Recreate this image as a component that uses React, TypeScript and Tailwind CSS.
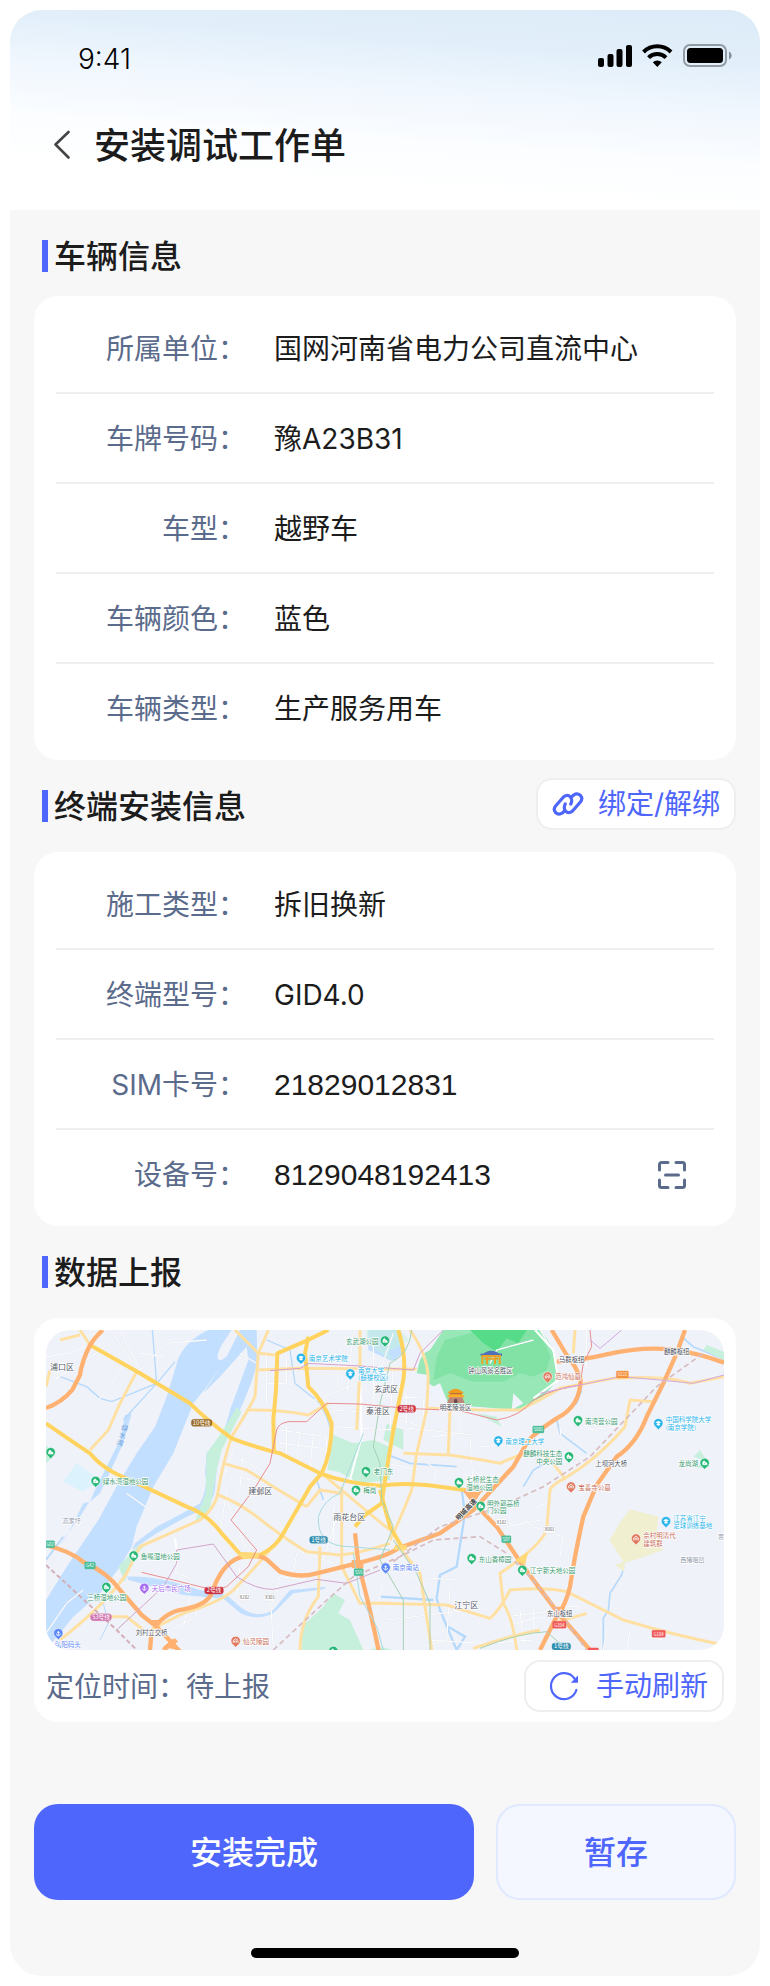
import React from "react";

type Row = { label: string; value: string; scan?: boolean; digits?: boolean };

const vehicleRows: Row[] = [
  { label: "所属单位：", value: "国网河南省电力公司直流中心" },
  { label: "车牌号码：", value: "豫A23B31" },
  { label: "车型：", value: "越野车" },
  { label: "车辆颜色：", value: "蓝色" },
  { label: "车辆类型：", value: "生产服务用车" },
];

const terminalRows: Row[] = [
  { label: "施工类型：", value: "拆旧换新" },
  { label: "终端型号：", value: "GID4.0" },
  { label: "SIM卡号：", value: "21829012831", digits: true },
  { label: "设备号：", value: "8129048192413", digits: true, scan: true },
];

function StatusIcons() {
  return (
    <svg className="h-[30px] w-[136px]" viewBox="0 0 136 30" aria-hidden="true">
      <g>
        <rect x="0" y="17" width="6" height="9" rx="2" />
        <rect x="9.500" y="13" width="6" height="13" rx="2" />
        <rect x="18.500" y="8" width="6" height="18" rx="2" />
        <rect x="28" y="4" width="6" height="22" rx="2" />
      </g>
      <g fill="none" stroke="#000" strokeWidth="4">
        <path d="M45.500 11a19.500 19.500 0 0 1 27.500 0" />
        <path d="M50.500 16.600a12.500 12.500 0 0 1 17.500 0" />
      </g>
      <path d="M54.800 21.200a6.800 6.800 0 0 1 9 0L59.300 26z" />
      <rect x="86" y="4" width="42" height="21" rx="6" fill="none" stroke="#000" strokeOpacity=".35" strokeWidth="2" />
      <rect x="89" y="7" width="36" height="15" rx="3.500" />
      <path d="M131 10.500c3.500 1.500 3.500 6.500 0 8z" fillOpacity=".4" />
    </svg>
  );
}

function LinkIcon() {
  return (
    <svg className="h-[26px] w-8" viewBox="0 0 32 26" fill="none" stroke="#4e66fb" strokeWidth="3.200" strokeLinecap="round" strokeLinejoin="round" aria-hidden="true">
      <path d="M12 20.500L10.300 22Q6.800 24.500 3.500 21.500Q.8 18.200 3.800 14.800L11.500 6Q15.500 2.800 18.500 6Q20.800 9 18.800 13" />
      <path d="M20 5.500L21.700 4Q25.200 1.500 28.500 4.500Q31.200 7.800 28.200 11.200L20.500 20Q16.500 23.200 13.500 20Q11.200 17 13.200 13" />
    </svg>
  );
}

function ScanIcon() {
  return (
    <svg className="size-8" viewBox="0 0 32 32" fill="none" stroke="#5b6b8c" strokeWidth="3" strokeLinecap="round" strokeLinejoin="round" aria-hidden="true">
      <path d="M3.500 11V5.500a2 2 0 0 1 2-2H12M20 3.500h6.500a2 2 0 0 1 2 2V11M28.500 21v5.500a2 2 0 0 1-2 2H20M12 28.500H5.500a2 2 0 0 1-2-2V21M9.500 16h13" />
    </svg>
  );
}

function RefreshIcon() {
  return (
    <svg className="size-8" viewBox="0 0 32 32" fill="none" aria-hidden="true">
      <path d="M28.400 20A13 13 0 1 1 26.500 8.500" stroke="#4e66fb" strokeWidth="2.200" strokeLinecap="round" />
      <path d="M30 5.500v7.200h-7.200z" fill="#4e66fb" />
    </svg>
  );
}

function SectionTitle({ children, action }: { children: React.ReactNode; action?: React.ReactNode }) {
  return (
    <div className="flex items-center justify-between pl-2">
      <h2 className="flex items-center gap-1.5 text-[32px] leading-[44px] font-medium text-[#1c1c1c]">
        <span className="h-8 w-1.5 bg-[#4e66fb]" />
        <span className="pt-0.5">{children}</span>
      </h2>
      {action}
    </div>
  );
}

function InfoCard({ rows }: { rows: Row[] }) {
  return (
    <dl className="divide-y-2 divide-[#eeeeee] rounded-3xl bg-white px-[22px] py-2">
      {rows.map((row) => (
        <div key={row.label} className="flex h-[90px] items-center gap-7 pt-0.5 last:h-[88px]">
          <dt className="w-[190px] text-right text-[#5b6b8c]">{row.label}</dt>
          <dd className="flex flex-1 items-center justify-between pr-[26px] text-[#1c1c1c]">
            <span className={row.digits ? "font-['Liberation_Sans',sans-serif] text-[30px]" : ""}>{row.value}</span>
            {row.scan && (
              <button type="button" aria-label="扫码">
                <ScanIcon />
              </button>
            )}
          </dd>
        </div>
      ))}
    </dl>
  );
}

const expressways = [
  "M188 30Q165 52 150 75Q125 125 120 165L98 208Q65 248 18 264",
  "M18 676Q90 692 130 726Q200 755 240 810L305 885L350 920L425 1000",
  "M345 920Q380 875 430 868Q500 855 515 820Q545 730 600 712Q650 700 680 718L720 755Q780 775 830 760L950 730Q1040 710 1075 685L1200 640L1300 570L1420 440L1460 370Q1480 340 1550 295Q1620 260 1622 180Q1610 140 1580 105L1535 30",
  "M1550 125Q1640 118 1700 103Q1800 80 1890 88Q1980 100 2052 128",
  "M1935 30L1910 100L1870 190L1820 290Q1790 370 1730 410L1670 495L1630 590Q1605 700 1590 800Q1575 860 1555 880L1500 990",
  "M1275 510Q1310 560 1370 620L1450 740L1555 880L1650 990",
  "M945 640L955 730L985 850L1018 1000",
  "M330 990L335 930M370 990L410 960M1280 500L1330 510",
];

const arterials = [
  "M150 75L300 160L450 250Q500 300 575 355Q640 380 720 400L840 460Q920 490 1020 497Q1100 485 1200 500L1290 512",
  "M18 310Q90 360 150 400Q190 450 270 480L440 560Q500 580 545 640L600 702L660 705Q710 680 730 640L810 500L845 460Q875 400 875 310Q850 240 805 200L795 100L805 50",
  "M865 30L800 62L712 100L708 210L700 300L702 400",
  "M1075 30Q1100 110 1090 180L1060 330L1035 480L1025 550L975 585L945 620",
  "M1020 510L1050 620L1085 680",
];

const streets = [
  "M120 30L150 75M290 155L240 250L205 330L150 390",
  "M585 30L655 100Q650 160 645 230Q620 280 575 350Q550 420 535 510Q530 560 480 600L300 680L260 760Q200 850 60 960",
  "M685 30L655 100L705 105M620 270Q720 268 805 285L865 250",
  "M550 430L620 450L700 500L800 560M535 525Q600 550 650 590Q740 660 800 695L900 705Q960 700 1050 670",
  "M845 460L1000 590L1050 630M905 500L905 740L935 800L960 850L1050 850",
  "M960 30L960 150L950 330M655 150L780 145L1130 148",
  "M1110 30Q1160 100 1165 170L1160 270L1130 400L1115 510Q1080 600 1050 660",
  "M1165 265L1330 270L1440 270Q1500 240 1560 205L1720 175Q1880 165 1950 190L2052 170",
  "M1090 400L1230 405Q1330 420 1380 430Q1440 400 1495 395L1535 425L1575 475",
  "M1840 245L1770 240L1755 320Q1680 410 1575 475Q1540 490 1530 510L1520 630Q1500 680 1380 760L1390 850Q1420 900 1430 990",
  "M1230 270L1225 400M1605 30L1600 100M1600 180L1550 160",
  "M1020 850L1220 855L1350 895Q1380 870 1410 810Q1520 800 1580 815L1750 900Q1900 945 2052 975M1555 905L1640 880",
  "M840 680L835 830Q780 900 780 990M1085 690L1140 760L1175 990",
  "M150 890L260 890L310 930M330 930L430 880Q560 840 590 800Q650 740 730 640",
  "M1300 985Q1400 950 1500 930M800 560L840 510L905 520",
  "M18 200L30 150M60 60L120 45",
];

const lanes = [
  "M40 180L140 120L200 75M18 110L90 100L150 75M60 120L50 180M40 400L100 340M80 350L210 200L260 120",
  "M210 30L280 130M240 30L300 150M300 150L380 70L500 60M300 100L370 110",
  "M680 100L680 250M740 110L740 190L680 190M690 240L860 240M650 130L600 100",
  "M720 330L860 350L860 400M740 320L740 420M780 330L770 430M820 340L810 450M720 370L850 385",
  "M570 400L700 470M590 470L680 490M610 400L600 500M560 480L650 560M580 390L550 470M560 510L540 640",
  "M850 130L1050 160M850 230L1000 170M900 80L890 200M940 40L920 230M1000 60L1000 260M1060 120L1050 330M870 270L1040 280M880 320L1060 330",
  "M1030 230L1180 235M1100 220L1100 310M1150 240L1150 320L1080 300M1060 320L1300 345L1320 380L1390 375M1290 350L1300 500",
  "M1260 280L1260 340L1180 350M1350 130L1370 90L1480 60M1500 30L1550 110L1550 180M1640 30L1640 150",
  "M1660 260L1720 230L1800 130L1830 110M1560 320Q1560 380 1600 400L1660 430M1740 320L1640 330",
  "M1060 40L1010 180M1140 450L1040 430M1110 390L1190 450L1180 490",
  "M640 740L550 660M400 650L415 700L410 760L470 780M600 740L590 830M650 740L690 800L700 990M760 760L770 700",
  "M770 690L880 730M810 650L860 660M900 560L850 720M880 560L880 690M700 850L720 770L800 780",
  "M350 950L470 890L470 850M430 920L450 830M180 980L270 890M18 940L80 850L130 810",
  "M1030 700L1100 770L1250 780L1400 780M1230 800L1220 960L1150 980M1030 780L1010 880M1040 900L1290 870L1340 940M1160 960L1330 970L1350 930",
  "M1390 920L1500 890L1560 920M1440 870L1450 970M1480 870L1480 950M1400 890L1560 870M1340 970L1480 960",
  "M1400 560L1480 620L1570 650L1560 710L1520 760M1400 620L1500 600M1380 640L1330 550M1490 560L1550 540",
  "M1700 930L1690 990M1770 930L1760 990M1820 950L1870 960L1900 990M1560 860L1620 860",
  "M260 520L330 570M620 690L560 540L640 460",
];

type Poi = { x: number; y: number; color: string; text: string[]; tx: number; ty: number; anchor?: "start" | "middle" | "end" };
const GREEN = "#27b877";
const GTEXT = "#379a70";
const BLUE = "#29b4ea";
const BROWN = "#e07a60";

const pois: Poi[] = [
  { x: 1035, y: 62, color: GREEN, text: ["玄武湖公园"], tx: 918, ty: 71 },
  { x: 783, y: 114, color: BLUE, text: ["南京艺术学院"], tx: 806, ty: 123 },
  { x: 931, y: 161, color: BLUE, text: ["南京大学", "(鼓楼校区)"], tx: 954, ty: 158 },
  { x: 32, y: 397, color: GREEN, text: [], tx: 0, ty: 0 },
  { x: 167, y: 483, color: GREEN, text: ["绿水湾湿地公园"], tx: 188, ty: 492 },
  { x: 978, y: 454, color: GREEN, text: ["老门东"], tx: 1001, ty: 463 },
  { x: 948, y: 510, color: GREEN, text: ["梅岗"], tx: 970, ty: 519 },
  { x: 1523, y: 170, color: BROWN, text: ["范鸿仙墓"], tx: 1545, ty: 178 },
  { x: 1375, y: 362, color: BLUE, text: ["南京理工大学"], tx: 1396, ty: 372 },
  { x: 1614, y: 301, color: GREEN, text: ["南湾营公园"], tx: 1635, ty: 311 },
  { x: 1855, y: 310, color: BLUE, text: ["中国科学院大学", "(南京学院)"], tx: 1877, ty: 306 },
  { x: 1587, y: 410, color: GREEN, text: ["麒麟科技生态", "中央公园"], tx: 1567, ty: 409, anchor: "end" },
  { x: 1994, y: 429, color: GREEN, text: ["龙尚湖"], tx: 1974, ty: 438, anchor: "end" },
  { x: 1257, y: 487, color: GREEN, text: ["七桥瓮生态", "湿地公园"], tx: 1279, ty: 486 },
  { x: 1593, y: 500, color: BROWN, text: ["宝善寺公墓"], tx: 1615, ty: 511 },
  { x: 281, y: 707, color: GREEN, text: ["鱼嘴湿地公园"], tx: 302, ty: 718 },
  { x: 199, y: 801, color: GREEN, text: ["三桥湿地公园"], tx: 200, ty: 841, anchor: "middle" },
  { x: 313, y: 804, color: "#a56cf0", text: ["天后市民广场"], tx: 335, ty: 814 },
  { x: 55, y: 940, color: "#5b87f7", text: ["弘阳码头"], tx: 44, ty: 980 },
  { x: 587, y: 963, color: BROWN, text: ["仙灵陵园"], tx: 609, ty: 973 },
  { x: 1322, y: 558, color: GREEN, text: ["明外郭高桥", "门公园"], tx: 1341, ty: 557 },
  { x: 1295, y: 715, color: GREEN, text: ["东山香樟园"], tx: 1316, ty: 725 },
  { x: 1447, y: 750, color: GREEN, text: ["江宁新天地公园"], tx: 1469, ty: 760 },
  { x: 1878, y: 604, color: BLUE, text: ["江苏省江宁", "足球训练基地"], tx: 1900, ty: 602 },
  { x: 1788, y: 656, color: BROWN, text: ["佘村明清代", "建筑群"], tx: 1810, ty: 655 },
  { x: 1037, y: 743, color: "#5b87f7", text: ["南京南站"], tx: 1058, ty: 751 },
  { x: 880, y: 993, color: GREEN, text: [], tx: 0, ty: 0 },
];

const places: [number, number, string, number, string][] = [
  [30, 151, "浦口区", 24, "#555b68"],
  [1003, 217, "玄武区", 24, "#555b68"],
  [978, 282, "秦淮区", 24, "#555b68"],
  [625, 521, "建邺区", 24, "#555b68"],
  [880, 600, "雨花台区", 24, "#555b68"],
  [1243, 865, "江宁区", 24, "#555b68"],
  [68, 609, "高家圩", 18, "#8c94a8"],
  [1921, 727, "西猪咀凹", 18, "#8c94a8"],
  [2034, 656, "贾", 18, "#8c94a8"],
  [287, 944, "刘村立交桥", 19, "#555b68"],
  [1557, 125, "马群枢纽", 19, "#4b5160"],
  [1872, 101, "麒麟枢纽", 19, "#4b5160"],
  [1666, 437, "上坝河大桥", 19, "#4b5160"],
  [1285, 160, "钟山风景名胜区", 19, "#4b5160"],
  [1199, 271, "明孝陵景区", 19, "#4b5160"],
  [1521, 887, "东山枢纽", 19, "#4b5160"],
];

const badges: [number, number, number, string, string, string][] = [
  [485, 308, 62, "#9b6d2a", "#fff", "10号线"],
  [1100, 266, 54, "#cc3344", "#fff", "2号线"],
  [522, 811, 56, "#cc3344", "#fff", "2号线"],
  [836, 659, 54, "#328fb0", "#fff", "1号线"],
  [1564, 979, 56, "#328fb0", "#fff", "1号线"],
  [183, 891, 62, "#d074ae", "#fff", "S3号线"],
  [1747, 163, 36, "#f5913f", "#fff", "S122"],
  [1495, 328, 34, "#4cbf9a", "#fff", "S001"],
  [150, 736, 32, "#4cbf9a", "#fff", "G42"],
  [30, 672, 28, "#4cbf9a", "#fff", "G02"],
  [956, 756, 28, "#4cbf9a", "#fff", "S55"],
  [1399, 657, 28, "#4cbf9a", "#fff", "S87"],
  [1558, 914, 40, "#f05a5a", "#fff", "G104"],
  [1856, 941, 40, "#f05a5a", "#fff", "G104"],
  [614, 831, 34, "#fff", "#666", "X202"],
  [690, 832, 34, "#fff", "#666", "X301"],
  [1385, 605, 34, "#fff", "#666", "X102"],
  [1529, 628, 34, "#fff", "#666", "X001"],
];

function Pin({ x, y, color }: { x: number; y: number; color: string }) {
  return (
    <g transform={`translate(${x} ${y})`}>
      <path d="M0 19L-8 11A14 14 0 1 1 8 11Z" fill={color} stroke="#fff" strokeWidth="1.500" />
      {color === GREEN && <path d="M-6 5V-2l4-5 3 4v5M-6 5H7V1L3-2" fill="#fff" stroke="#fff" strokeWidth="2" />}
      {color === BLUE && <path d="M-9-3L0-7L9-3L0 1ZM-5 1v4q5 3 10 0V1" fill="#fff" />}
      {color === BROWN && <path d="M-7 5V-2L0-7L7-2V5M-3 5V0H3V5" fill="none" stroke="#fff" strokeWidth="2.500" />}
      {color !== GREEN && color !== BLUE && color !== BROWN && (
        <path d="M0-7V6M-6 1q1 6 6 6t6-6M-4-3H4" fill="none" stroke="#fff" strokeWidth="2.500" />
      )}
    </g>
  );
}

// Map units are one third of a display pixel.
function CityMap() {
  return (
    <svg
      className="block w-full rounded-3xl bg-[#f0f2fa]"
      viewBox="18 30 2034 960"
      role="img"
      aria-label="定位地图"
      fontFamily='"Noto Sans CJK SC", sans-serif'
    >
      <g fill="#c2dfff">
        <path d="M505 30Q440 60 415 115L380 230L345 320L290 400L235 490L175 600L80 740L18 840V990L100 890L180 820L240 740L275 680L290 620L340 500L400 400L460 250L500 200Q560 110 595 85L545 120Q520 125 545 75L575 30Z" />
        <path d="M600 30L650 30L652 130Q625 230 560 350Q530 410 525 510Q520 560 440 590L350 640L275 690L285 670L350 620Q430 580 480 550Q505 500 495 460L500 400Q550 360 570 270Q600 190 625 120L620 80L540 170L490 220L560 110Z" />
        <path d="M275 280L255 285L240 360L165 510L150 545L130 550L100 610L60 680L75 650L120 590L145 550L180 520L250 370Z" />
        <path d="M985 30H1080L1095 90L1060 125L985 90Z" />
        <path d="M260 770Q350 765 480 810L560 825L600 860Q650 900 700 870L750 810L860 800L850 808L760 820L700 880Q650 905 600 878L550 836L430 825L265 780Z" />
        <path d="M1020 375L1045 380L1040 440L1020 450Z" />
      </g>
      <g fill="none" stroke="#b5d9fb" strokeWidth="5">
        <path d="M337 30L350 190L250 300M405 125L350 190L215 245L180 235L140 200L60 170M680 60L750 90L765 190L840 250L860 290L880 350" strokeWidth="4" />
        <path d="M1020 395L1110 430L1250 440M1450 500L1480 450L1530 420M1625 210L1610 250L1550 300L1560 340L1640 400M1925 50L1960 80L2052 118" />
        <path d="M1265 510L1275 580L1250 740L1200 765L1190 835L1200 870L1250 990M1225 920L1275 950L1250 990M1020 830L1180 840" strokeWidth="7" />
        <path d="M1752 740L1745 765L1710 820L1705 870L1690 895V990M830 480L850 540M18 720L70 650" />
        <path d="M130 830L190 850L205 910L180 960" strokeWidth="3" />
      </g>
      <path d="M110 430L180 480L130 515L68 485Z" fill="#dcf3fd" />
      <g fill="#c7f0dc">
        <path d="M590 262L550 330L500 400L497 520L465 605L510 570L530 450L545 390L605 275Z" />
        <path d="M345 655L290 680L235 740L255 785L270 730L300 690Z" />
        <path d="M880 345L940 370L1000 360L1050 380V480L960 490L895 455L862 450Z" />
        <path d="M880 820L915 840L895 880L930 900L970 990H785V920L850 860Z" />
        <path d="M980 60L1010 90L1060 125L1045 95L1110 60L1080 30H980Z" fillOpacity=".55" />
        <path d="M1310 280L1370 290L1385 320Z" />
        <path d="M1980 390L2000 420L2010 440L1970 445L1990 420L1960 410Z" />
        <path d="M2000 75L2052 95V120L1990 90ZM18 375L45 405L18 430ZM1040 310L1090 330L1090 390L1030 360ZM1020 980L1060 990H990Z" />
      </g>
      <path d="M1770 568L1855 590L1850 640L1870 690L1800 715L1755 728L1752 755L1725 735L1750 725L1708 660L1745 600Z" fill="#f0efd0" />
      <path d="M1210 30H1500Q1545 80 1550 130L1545 190L1500 240L1430 270L1330 262L1230 255L1200 210L1165 190V165L1130 160L1140 120L1152 100L1170 90L1190 60Z" fill="#97e8b6" />
      <path d="M1215 60L1270 45L1320 30H1490L1510 60L1532 110L1520 150L1480 170L1440 160L1390 185L1300 185L1230 160L1180 180L1190 110Z" fill="#82e2a6" />
      <path d="M1290 30H1460L1435 70L1400 55L1370 95L1330 70Z" fill="#56dc88" />
      <path d="M1170 205L1200 190L1220 240H1195ZM1420 220L1450 250L1415 270Z" fill="#eff3fb" />

      <g fill="none" stroke="#e1e4eb" strokeWidth="4">
        {lanes.map((d) => (
          <path key={d} d={d} />
        ))}
      </g>
      <g fill="none" stroke="#fff" strokeWidth="3">
        {lanes.map((d) => (
          <path key={d} d={d} />
        ))}
        <path d="M960 150L965 350L930 480M1485 30L1540 90L1555 180L1480 235M405 655L415 720" strokeWidth="6" />
      </g>
      <g fill="none" stroke="#ffe0a3" strokeWidth="9" strokeLinejoin="round">
        {streets.map((d) => (
          <path key={d} d={d} />
        ))}
      </g>
      <g fill="none" stroke="#ffd35d" strokeWidth="12" strokeLinejoin="round">
        {arterials.map((d) => (
          <path key={d} d={d} />
        ))}
      </g>
      <g fill="none" stroke="#ffb171" strokeWidth="13" strokeLinejoin="round">
        {expressways.map((d) => (
          <path key={d} d={d} />
        ))}
      </g>
      <path d="M325 900H365L350 930ZM1540 860H1575L1565 895H1545ZM370 980L400 955L412 990ZM935 720H970V745H935ZM1285 515H1325L1305 545Z" fill="#ffb171" />
      <path d="M1425 720L1465 695L1455 735ZM590 700L660 698L655 715L610 718ZM1065 675H1100V690H1060Z" fill="#ffd877" />

      <g fill="none" strokeWidth="3">
        <path d="M645 503L690 430L710 330Q715 310 745 305H800L860 250L960 252L1100 265L1260 272L1370 300Q1440 290 1480 240Q1540 205 1620 195L1630 130L1655 80L1650 30" stroke="#e88d8d" />
        <path d="M645 503L573 600L650 690L625 740L560 800L520 810L400 780L305 757" stroke="#ea8f8f" />
        <path d="M690 152L780 145L805 130L960 138L1120 150L1140 100L1210 30" stroke="#d3a0cc" />
        <path d="M1650 60L1680 85L1710 60L1745 30M1500 220L1740 170L1860 180L1960 190L2052 165" stroke="#cfa8e0" />
        <path d="M230 930L370 800L410 730V690L520 672L590 770Q650 810 700 808L830 778L920 790L1020 750" stroke="#d2a5c8" />
        <path d="M18 735L230 930L290 990" stroke="#d2b0b8" strokeWidth="6" strokeDasharray="14 8" />
        <path d="M700 990L850 850L940 770L1080 710L1180 660L1320 650L1400 700L1470 770L1560 880L1640 990M1060 725L1200 620L1380 560L1510 500L1650 410L1850 200L1990 100" stroke="#d7bcc0" strokeWidth="5" strokeDasharray="16 10" />
        <path d="M970 340L900 520Q850 540 835 590Q830 680 930 680L1050 690M940 700L960 830L1010 920L1030 990" stroke="#a6dadd" />
        <path d="M1115 30Q1110 100 1050 130L1020 250L1000 380L1020 430L1025 540L1060 620L1020 720L1090 840V990M1170 990V850L1130 760L1060 660M1320 985Q1430 940 1520 935L1570 980" stroke="#a5d0b2" />
      </g>

      <g transform="translate(1328 90)">
        <path d="M-6 10Q0 14 10 6Q25-2 42 6Q52 14 58 10V18H-6Z" fill="#5271b8" />
        <path d="M-3 18H55M-1 18V43M13 18V43M37 18V43M51 18V43M5 26H47" stroke="#eba126" strokeWidth="6" />
      </g>
      <g transform="translate(1222 205)">
        <path d="M-1 44L8 22H43L52 44Z" fill="#bd8879" />
        <path d="M4 10Q24-8 46 10L50 15H0Z" fill="#f29b1c" />
        <path d="M7 15H44V20H7Z" fill="#ba532a" />
        <path d="M0 22L8 18H43L51 22V27H0Z" fill="#ffad27" />
        <path d="M20 44V34Q25 28 30 34V44Z" fill="#6b4b50" />
      </g>

      <rect x="1644" y="983" width="32" height="20" rx="3" fill="#f05a5a" />
      {badges.map(([x, y, w, fill, color, label]) => (
        <g key={`${x}-${y}`}>
          <rect x={x - w / 2} y={y - 10} width={w} height="21" rx={label.includes("号") ? 8 : 3} fill={fill} stroke={fill === "#fff" ? "#d6d9df" : fill} />
          <text x={x} y={y + 6} textAnchor="middle" fontSize={label.includes("号") ? 17 : 13} fill={color}>
            {label}
          </text>
        </g>
      ))}

      <g stroke="#fff" strokeWidth="4" strokeLinejoin="round" paintOrder="stroke">
        {places.map(([x, y, label, size, fill]) => (
          <text key={`${x}-${y}`} x={x} y={y} fontSize={size} fill={fill}>
            {label}
          </text>
        ))}
        <text transform="translate(256 318) rotate(17)" fontSize="20" fill="#6fa0d6" stroke="none">
          <tspan x="-10" y="14">绿</tspan>
          <tspan x="-10" y="37">水</tspan>
          <tspan x="-10" y="60">湾</tspan>
        </text>
        <text transform="translate(1256 602) rotate(-46)" fontSize="20" fontWeight="700" fill="#444">
          明城高速
        </text>
        {pois.map((p) =>
          p.text.map((line, i) => (
            <text
              key={`${p.x}-${line}`}
              x={p.tx}
              y={p.ty + i * 23}
              fontSize="19.500"
              textAnchor={p.anchor ?? "start"}
              fill={p.color === GREEN ? GTEXT : p.color === BROWN ? "#c9705c" : p.color}
            >
              {line}
            </text>
          )),
        )}
      </g>
      {pois.map((p) => (
        <Pin key={`${p.x}-${p.y}`} x={p.x} y={p.y} color={p.color} />
      ))}
    </svg>
  );
}

export default function App() {
  return (
    <div className="bg-white p-2.5 font-[Inter,'Noto_Sans_CJK_SC',sans-serif] text-[28px] leading-10">
      <div className="overflow-hidden rounded-[32px] bg-[#f7f7f7]">
        <header className="h-[200px] bg-[linear-gradient(184deg,#dcebf8_0%,#e2effa_22%,#f1f7fe_42%,#fbfdff_62%,#ffffff_82%)]">
          <div className="flex items-start justify-between pt-[29px] pr-[26px] pl-[68px]">
            <span className="font-light text-black">9:41</span>
            <span className="flex pt-0.5">
              <StatusIcons />
            </span>
          </div>
          <div className="flex items-center gap-3.5 pt-[41px] pl-11">
            <button type="button" aria-label="返回">
              <svg className="h-8 w-[26px]" viewBox="0 0 26 32" fill="none" stroke="#444" strokeWidth="2.600" strokeLinecap="round" strokeLinejoin="round" aria-hidden="true">
                <path d="M14.500 3L1.500 15.500L14.500 28.500" />
              </svg>
            </button>
            <h1 className="pt-0.5 text-[36px] leading-[48px] font-medium text-[#1c1c1c]">安装调试工作单</h1>
          </div>
        </header>

        <main className="px-6">
          <section>
            <div className="flex h-[86px] flex-col justify-center pt-1.5">
              <SectionTitle>车辆信息</SectionTitle>
            </div>
            <InfoCard rows={vehicleRows} />
          </section>

          <section>
            <div className="flex h-[92px] flex-col justify-center">
              <SectionTitle
                action={
                  <div className="pb-1">
                    <button type="button" className="flex h-[52px] items-center gap-3.5 rounded-2xl border-2 border-[#eeeeee] bg-white px-3.5 text-[#4e66fb]">
                      <LinkIcon />
                      绑定/解绑
                    </button>
                  </div>
                }
              >
                终端安装信息
              </SectionTitle>
            </div>
            <InfoCard rows={terminalRows} />
          </section>

          <section>
            <div className="flex h-[92px] flex-col justify-center">
              <SectionTitle>数据上报</SectionTitle>
            </div>
            <div className="rounded-3xl bg-white px-3 pt-3 pb-2.5">
              <CityMap />
              <div className="flex items-center justify-between pt-2.5">
                <p className="pt-0.5 text-[#5b6b8c]">定位时间：待上报</p>
                <button type="button" className="flex h-[52px] items-center gap-4 rounded-2xl border-2 border-[#eeeeee] bg-white pr-3.5 pl-[22px] text-[#4e66fb]">
                  <RefreshIcon />
                  手动刷新
                </button>
              </div>
            </div>
          </section>

          <div className="grid grid-cols-[11fr_6fr] gap-[22px] pt-[82px] text-[32px] font-medium">
            <button type="button" className="h-24 rounded-3xl bg-[#4e66fb] pt-0.5 text-white">
              安装完成
            </button>
            <button type="button" className="h-24 rounded-3xl border-2 border-[#e0e9ff] bg-[#f4f7ff] pt-0.5 text-[#4e66fb]">
              暂存
            </button>
          </div>
        </main>

        <div className="flex justify-center pt-12 pb-[18px]">
          <span className="h-2.5 w-[268px] rounded-full bg-black" />
        </div>
      </div>
    </div>
  );
}
